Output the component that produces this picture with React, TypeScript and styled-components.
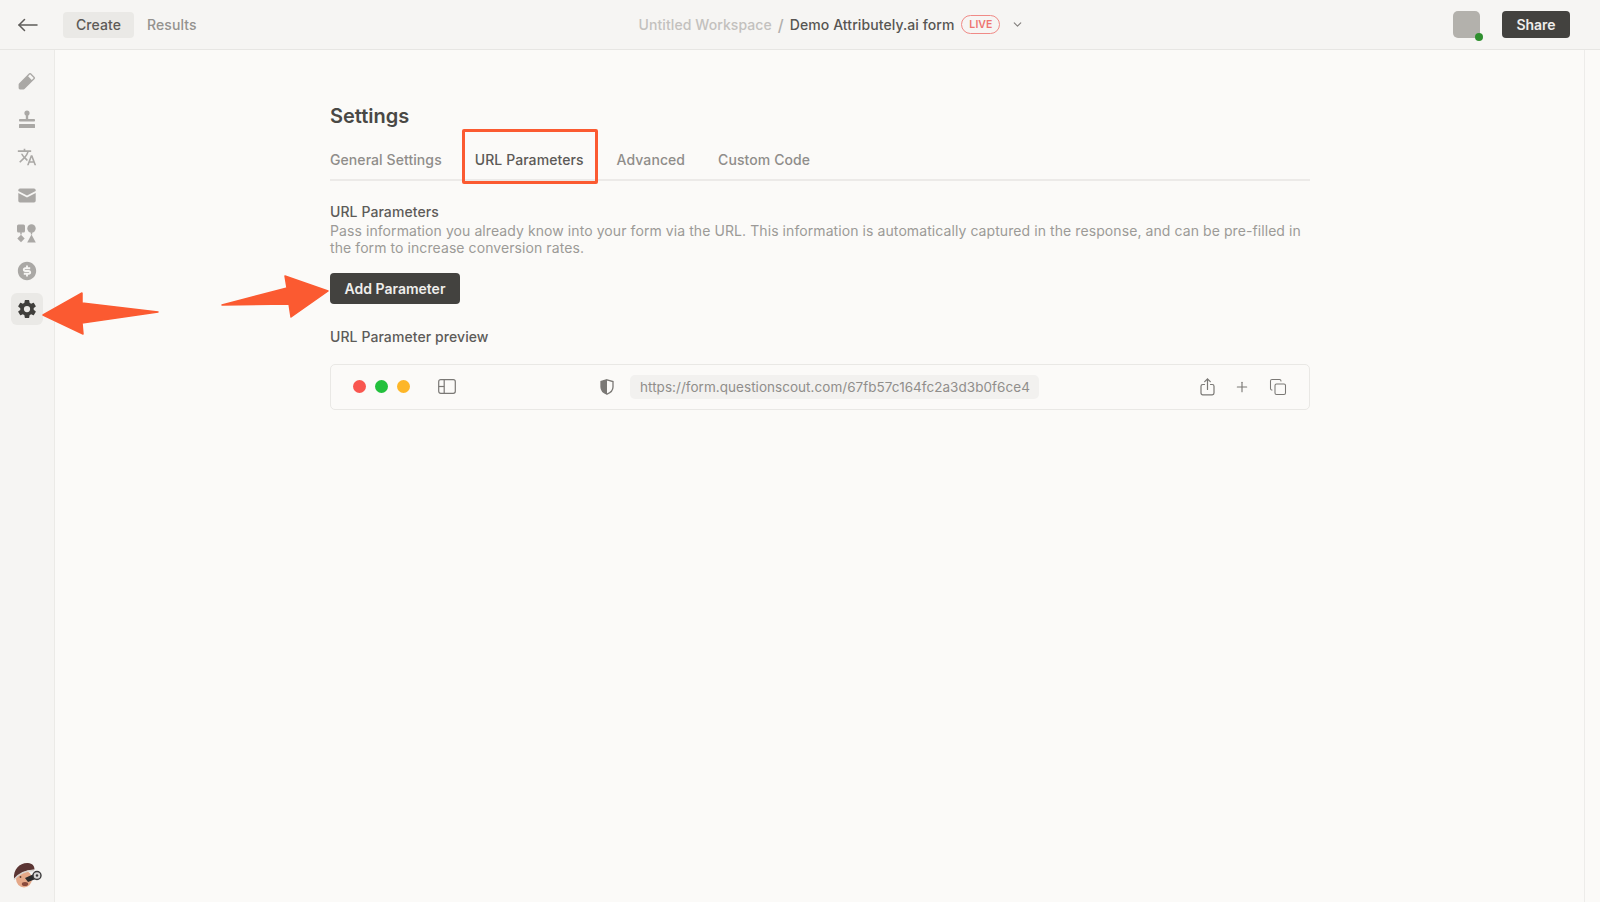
import React from 'react';
import styled, { createGlobalStyle } from 'styled-components';
import { ChevronDown, Copy, Plus } from 'lucide-react';
import { IoSettingsSharp } from 'react-icons/io5';
import { MdTranslate } from 'react-icons/md';
import { PiPencilSimpleFill } from 'react-icons/pi';
import { RiMoneyDollarCircleFill } from 'react-icons/ri';

const GlobalStyle = createGlobalStyle`
  html, body {
    margin: 0;
    padding: 0;
    height: 100%;
    overflow: hidden;
    background: #fbfaf8;
    font-family: Inter, "Liberation Sans", sans-serif;
    letter-spacing: 0.08px;
    -webkit-font-smoothing: antialiased;
  }
`;

const Page = styled.div`
  position: relative;
  width: 1600px;
  height: 902px;
  display: flex;
  flex-direction: column;
  overflow: hidden;
`;

const Header = styled.header`
  height: 50px;
  flex: none;
  box-sizing: border-box;
  display: grid;
  grid-template-columns: 1fr auto 1fr;
  align-items: center;
  padding: 0 30px 0 18px;
  background: #f6f5f3;
  border-bottom: 1px solid #e7e6e3;
`;

const HeaderLeft = styled.div`
  display: flex;
  align-items: center;
`;

const BackButton = styled.button`
  display: flex;
  padding: 0;
  margin-right: 25px;
  border: 0;
  background: none;
  color: #5e5c59;
`;

const ModeTab = styled.div<{ $active?: boolean }>`
  height: 26px;
  padding: 0 13px;
  display: flex;
  align-items: center;
  border-radius: 4px;
  font-size: 14px;
  font-weight: 500;
  background: ${(p) => (p.$active ? '#eae9e6' : 'transparent')};
  color: ${(p) => (p.$active ? '#5c5a57' : '#94928f')};
`;

const Breadcrumb = styled.div`
  display: flex;
  align-items: center;
  font-size: 14px;
  font-weight: 500;
  margin-left: 75px;
`;

const Workspace = styled.span`
  color: #c3c1be;
`;

const Slash = styled.span`
  margin: 0 6px;
  color: #b1afac;
  font-size: 16px;
`;

const FormName = styled.span`
  color: #575552;
`;

const LiveBadge = styled.span`
  margin-left: 7px;
  width: 39px;
  height: 19px;
  box-sizing: border-box;
  display: flex;
  align-items: center;
  justify-content: center;
  border: 1.5px solid #f08a86;
  border-radius: 10px;
  color: #ee7570;
  font-size: 10.5px;
  font-weight: 600;
`;

const Caret = styled(ChevronDown)`
  margin-left: 11px;
  color: #807e7b;
`;

const HeaderRight = styled.div`
  display: flex;
  justify-content: flex-end;
  align-items: center;
  gap: 22px;
`;

const UserTile = styled.div`
  position: relative;
  width: 27px;
  height: 27px;
  border-radius: 5px;
  background: #b3b1ac;
`;

const OnlineDot = styled.span`
  position: absolute;
  right: -3px;
  bottom: -3px;
  width: 8px;
  height: 8px;
  border-radius: 50%;
  background: #2f8f2f;
`;

const DarkButton = styled.button`
  border: 0;
  border-radius: 4px;
  background: #43423f;
  color: #efeeec;
  font-family: inherit;
  font-size: 14px;
  font-weight: 600;
  display: flex;
  align-items: center;
  justify-content: center;
  padding: 0;
`;

const ShareButton = styled(DarkButton)`
  width: 68px;
  height: 27px;
`;

const Body = styled.div`
  flex: 1;
  display: flex;
  min-height: 0;
`;

const Sidebar = styled.nav`
  width: 55px;
  flex: none;
  box-sizing: border-box;
  display: flex;
  flex-direction: column;
  align-items: center;
  padding: 15px 1px 13px 0;
  background: #f6f5f3;
  border-right: 1px solid #ebeae7;
`;

const RailItem = styled.div<{ $active?: boolean }>`
  width: 32px;
  height: 32px;
  margin-bottom: 6px;
  display: flex;
  align-items: center;
  justify-content: center;
  border-radius: 6px;
  background: ${(p) => (p.$active ? '#eae9e6' : 'transparent')};
  color: ${(p) => (p.$active ? '#3f3e3b' : '#aaa8a5')};
`;

const RailSpacer = styled.div`
  flex: 1;
`;

const Main = styled.main`
  flex: 1;
  box-sizing: border-box;
  padding: 53px 0 0 275px;
  background: #fbfaf8;
`;

const RightStrip = styled.div`
  width: 15px;
  flex: none;
  background: #fbfaf8;
  border-left: 1px solid #edecea;
`;

const Content = styled.div`
  width: 980px;
`;

const Title = styled.h1`
  margin: 0;
  font-size: 20px;
  line-height: 26px;
  font-weight: 600;
  letter-spacing: 0;
  color: #494845;
`;

const TabBar = styled.div`
  display: flex;
  gap: 33px;
  height: 39px;
  margin-top: 13px;
  box-sizing: border-box;
  padding-top: 7.5px;
  border-bottom: 2px solid #eceae8;
`;

const Tab = styled.div<{ $active?: boolean }>`
  position: relative;
  font-size: 14px;
  line-height: 20px;
  font-weight: 500;
  white-space: nowrap;
  color: ${(p) => (p.$active ? '#5b5956' : '#8f8d8a')};
`;

const TabHighlight = styled.span`
  position: absolute;
  left: -13px;
  right: -14px;
  top: -20.5px;
  height: 55px;
  box-sizing: border-box;
  border: 3px solid #fb5a31;
  border-radius: 2px;
  pointer-events: none;
`;

const SectionLabel = styled.div`
  font-size: 14px;
  line-height: 18px;
  font-weight: 500;
  color: #5d5b58;
`;

const SectionHeading = styled(SectionLabel)`
  margin-top: 21.5px;
`;

const Description = styled.p`
  margin: 1.5px 0 0;
  font-size: 14px;
  line-height: 17px;
  color: #9c9a97;
`;

const AddButton = styled(DarkButton)`
  width: 130px;
  height: 31px;
  margin-top: 17px;
`;

const PreviewLabel = styled(SectionLabel)`
  margin-top: 23.5px;
`;

const BrowserBar = styled.div`
  height: 46px;
  margin-top: 18px;
  box-sizing: border-box;
  display: flex;
  align-items: center;
  padding: 0 22px;
  border: 1px solid #e9e8e5;
  border-radius: 5px;
`;

const Lights = styled.div`
  display: flex;
  gap: 9px;
  margin-right: 28px;
`;

const Light = styled.span<{ $color: string }>`
  width: 13px;
  height: 13px;
  border-radius: 50%;
  background: ${(p) => p.$color};
`;

const BarIcon = styled.span`
  display: flex;
  color: #7a7875;
`;

const ShieldSlot = styled(BarIcon)`
  margin-left: 144px;
  margin-right: 16px;
`;

const UrlPill = styled.div`
  width: 409px;
  height: 24px;
  box-sizing: border-box;
  display: flex;
  align-items: center;
  padding-left: 10px;
  border-radius: 5px;
  background: #f2f1ef;
  color: #908e8b;
  font-size: 13.5px;
  letter-spacing: 0.04px;
  white-space: nowrap;
`;

const BarActions = styled.div`
  margin-left: auto;
  display: flex;
  align-items: center;
  gap: 19px;
  color: #7a7875;
`;

const Callout = styled.svg`
  position: absolute;
  left: 0;
  top: 0;
  pointer-events: none;
`;

const BackArrow = () => (
  <svg width="20" height="14" viewBox="0 0 20 14" fill="none" stroke="currentColor" strokeWidth="1.5" strokeLinecap="round" strokeLinejoin="round">
    <path d="M1 7H19" />
    <path d="M6.5 1.5 1 7l5.5 5.5" />
  </svg>
);

const StampIcon = () => (
  <svg width="18" height="19" viewBox="0 0 18 19" fill="currentColor">
    <circle cx="9" cy="3" r="2.6" />
    <rect x="7.8" y="4" width="2.4" height="5" />
    <rect x="1" y="9" width="16" height="2.6" rx="0.8" />
    <rect x="1" y="14" width="16" height="4" rx="0.5" />
  </svg>
);

const MailIcon = () => (
  <svg width="18" height="15" viewBox="0 0 18 15" fill="currentColor">
    <path d="M2 0.5H16A1.7 1.7 0 0 1 17.7 2.2V3L9 7.6 0.3 3V2.2A1.7 1.7 0 0 1 2 0.5Z" />
    <path d="M0.3 5 9 9.6 17.7 5V12.8A1.7 1.7 0 0 1 16 14.500H2A1.7 1.7 0 0 1 0.3 12.8Z" />
  </svg>
);

const WorkflowIcon = () => (
  <svg width="19" height="19" viewBox="0 0 19 19" fill="currentColor">
    <rect x="0" y="0.5" width="8" height="8" rx="1.5" />
    <circle cx="14.5" cy="4.5" r="4.2" />
    <rect x="3.3" y="8" width="1.4" height="2.5" />
    <rect x="13.8" y="8" width="1.4" height="2.5" />
    <path d="M4 10.7 7.7 14.5 4 18.3 0.3 14.5Z" />
    <path d="M14.5 10.5 18.8 18.5H10.2Z" />
  </svg>
);

const PanelIcon = () => (
  <svg width="18" height="15" viewBox="0 0 18 15" fill="none" stroke="currentColor" strokeWidth="1.2">
    <rect x="0.7" y="0.7" width="16.6" height="13.6" rx="2" />
    <path d="M6.2 0.7V14.3" />
    <path d="M0.7 7.5H6.2" />
  </svg>
);

const ShieldIcon = () => (
  <svg width="14" height="16" viewBox="0 0 14 16">
    <path d="M7 .8 13 2.6V8c0 3.4-2.6 5.8-6 7.2C3.6 13.8 1 11.4 1 8V2.6Z" fill="none" stroke="currentColor" strokeWidth="1.3" />
    <path d="M7 .8V15.2C3.6 13.8 1 11.4 1 8V2.6Z" fill="currentColor" />
  </svg>
);

const ShareIcon = () => (
  <svg width="15" height="18" viewBox="0 0 15 18" fill="none" stroke="currentColor" strokeWidth="1.2" strokeLinecap="round" strokeLinejoin="round">
    <path d="M4.5 6.5H2.7A1.7 1.7 0 0 0 1 8.2v6.9a1.7 1.7 0 0 0 1.7 1.7h9.6a1.7 1.7 0 0 0 1.7-1.7V8.2a1.7 1.7 0 0 0-1.7-1.7h-1.8" />
    <path d="M7.5 11.5V1" />
    <path d="M4.7 3.6 7.5 1l2.8 2.6" />
  </svg>
);

const HatAvatar = () => (
  <svg width="30" height="28" viewBox="0 0 30 28">
    <ellipse cx="12" cy="18" rx="8" ry="8.5" fill="#e5a888" />
    <path d="M2 18C1 8 8 1.500 16 2c4.500.4 6.500 3 6.500 6.500-6 0-14 3-20.500 9.500Z" fill="#5b3533" />
    <path d="M2 18.500C7 12.500 14 9.500 22 9.500" fill="none" stroke="#d9d4cf" strokeWidth="1.5" />
    <path d="M13 17 23 12.500l2 5-9 3.500Z" fill="#2c2b2c" />
    <circle cx="25" cy="14.500" r="4" fill="#d8d7d6" stroke="#3a393a" strokeWidth="1.4" />
    <circle cx="25" cy="14.500" r="1.2" fill="#3a393a" />
    <ellipse cx="13" cy="23" rx="3.2" ry="2" fill="#8a4a3c" />
    <circle cx="8.5" cy="16" r="0.9" fill="#5a3a30" />
  </svg>
);

const railIcons = [
  { key: 'design', icon: <PiPencilSimpleFill size={21} /> },
  { key: 'stamp', icon: <StampIcon /> },
  { key: 'translate', icon: <MdTranslate size={20} /> },
  { key: 'mail', icon: <MailIcon /> },
  { key: 'flow', icon: <WorkflowIcon /> },
  { key: 'billing', icon: <RiMoneyDollarCircleFill size={22} /> },
  { key: 'settings', icon: <IoSettingsSharp size={20} />, active: true },
];

const tabs = ['General Settings', 'URL Parameters', 'Advanced', 'Custom Code'];

const App: React.FC = () => {
  return (
    <Page>
      <GlobalStyle />
      <Header>
        <HeaderLeft>
          <BackButton>
            <BackArrow />
          </BackButton>
          <ModeTab $active>Create</ModeTab>
          <ModeTab>Results</ModeTab>
        </HeaderLeft>
        <Breadcrumb>
          <Workspace>Untitled Workspace</Workspace>
          <Slash>/</Slash>
          <FormName>Demo Attributely.ai form</FormName>
          <LiveBadge>LIVE</LiveBadge>
          <Caret size={13} strokeWidth={2} />
        </Breadcrumb>
        <HeaderRight>
          <UserTile>
            <OnlineDot />
          </UserTile>
          <ShareButton>Share</ShareButton>
        </HeaderRight>
      </Header>

      <Body>
        <Sidebar>
          {railIcons.map((item) => (
            <RailItem key={item.key} $active={item.active}>
              {item.icon}
            </RailItem>
          ))}
          <RailSpacer />
          <HatAvatar />
        </Sidebar>

        <Main>
          <Content>
            <Title>Settings</Title>
            <TabBar>
              {tabs.map((tab) => (
                <Tab key={tab} $active={tab === 'URL Parameters'}>
                  {tab}
                  {tab === 'URL Parameters' && <TabHighlight />}
                </Tab>
              ))}
            </TabBar>
            <SectionHeading>URL Parameters</SectionHeading>
            <Description>
              Pass information you already know into your form via the URL. This information is
              automatically captured in the response, and can be pre-filled in the form to increase
              conversion rates.
            </Description>
            <AddButton>Add Parameter</AddButton>
            <PreviewLabel>URL Parameter preview</PreviewLabel>
            <BrowserBar>
              <Lights>
                <Light $color="#f9564f" />
                <Light $color="#22c03c" />
                <Light $color="#fdb628" />
              </Lights>
              <BarIcon>
                <PanelIcon />
              </BarIcon>
              <ShieldSlot>
                <ShieldIcon />
              </ShieldSlot>
              <UrlPill>https://form.questionscout.com/67fb57c164fc2a3d3b0f6ce4</UrlPill>
              <BarActions>
                <ShareIcon />
                <Plus size={16} strokeWidth={1.7} />
                <Copy size={18} strokeWidth={1.4} />
              </BarActions>
            </BrowserBar>
          </Content>
        </Main>
        <RightStrip />
      </Body>

      <Callout width="1600" height="902" viewBox="0 0 1600 902" fill="#fb5a31" stroke="#fb5a31" strokeWidth="1.5" strokeLinejoin="round">
        <path d="M43 315 82 293 82 303 158 312 82 323 83 334Z" />
        <path d="M222 305 287 288 285 276 328 291 291 317 289 304Z" />
      </Callout>
    </Page>
  );
};

export default App;
